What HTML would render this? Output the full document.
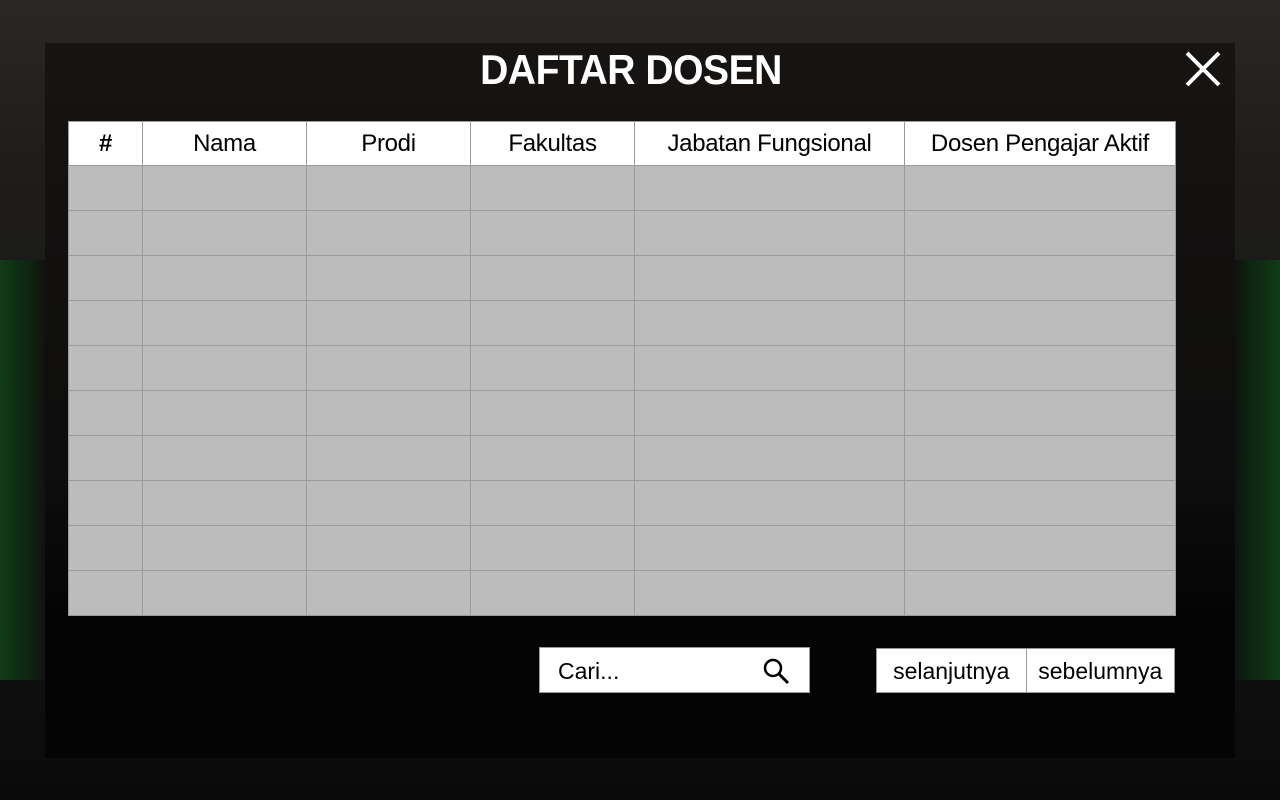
<!DOCTYPE html><html><head><style>
*{margin:0;padding:0;box-sizing:border-box}
body{width:1280px;height:800px;overflow:hidden;font-family:"Liberation Sans",sans-serif;position:relative;
background:linear-gradient(180deg,#2a2826 0%,#1f1d1b 20%,#161816 55%,#0a0a0a 100%);}
.gl{position:absolute;left:0;top:260px;width:45px;height:420px;background:linear-gradient(90deg,#123a18,#0c2410 70%,#111);}
.gr{position:absolute;right:0;top:260px;width:45px;height:420px;background:linear-gradient(270deg,#123a18,#0c2410 70%,#111);}
.modal{position:absolute;left:45px;top:43px;width:1190px;height:715px;background:linear-gradient(180deg,rgba(20,17,15,0.85),rgba(12,12,12,0.85) 60%,rgba(3,3,3,0.95) 80%)}
h1{position:absolute;left:0;width:1262px;top:46px;text-align:center;color:#fff;font-size:42px;font-weight:bold;letter-spacing:-0.5px;transform:scaleX(0.93)}
.x{position:absolute;left:1184px;top:50px}
table{position:absolute;left:68px;top:121px;width:1108px;border-collapse:collapse}
td,th{border:1px solid #9a9a9a}
th{background:#fff;height:44px;font-weight:normal;font-size:24px;color:#000;letter-spacing:-0.3px}
td{background:rgba(196,196,196,0.96);height:45px}
.search{position:absolute;left:539px;top:647px;width:271px;height:46px;background:#fff;border:1px solid #999;font-size:23px;padding:10px 18px;color:#000}
.btns{position:absolute;left:876px;top:648px;width:299px;height:45px;display:flex;border:1px solid #999}
.btns div{background:#fff;font-size:23px;padding:9px 0;color:#000;width:149px;text-align:center}
.btns div+div{border-left:1px solid #999}
</style></head><body>
<div class="gl"></div><div class="gr"></div>
<div class="modal"></div>
<h1>DAFTAR DOSEN</h1>
<svg class="x" width="38" height="38" viewBox="0 0 38 38"><path d="M3 3L35 35M35 3L3 35" stroke="#fff" stroke-width="4"/></svg>
<table>
<tr><th style="width:74px;font-weight:bold">#</th><th style="width:164px">Nama</th><th style="width:164px">Prodi</th><th style="width:164px">Fakultas</th><th style="width:270px">Jabatan Fungsional</th><th>Dosen Pengajar Aktif</th></tr>
<tr><td></td><td></td><td></td><td></td><td></td><td></td></tr>
<tr><td></td><td></td><td></td><td></td><td></td><td></td></tr>
<tr><td></td><td></td><td></td><td></td><td></td><td></td></tr>
<tr><td></td><td></td><td></td><td></td><td></td><td></td></tr>
<tr><td></td><td></td><td></td><td></td><td></td><td></td></tr>
<tr><td></td><td></td><td></td><td></td><td></td><td></td></tr>
<tr><td></td><td></td><td></td><td></td><td></td><td></td></tr>
<tr><td></td><td></td><td></td><td></td><td></td><td></td></tr>
<tr><td></td><td></td><td></td><td></td><td></td><td></td></tr>
<tr><td></td><td></td><td></td><td></td><td></td><td></td></tr>
</table>
<div class="search">Cari...
<svg style="position:absolute;left:222px;top:9px" width="28" height="28" viewBox="0 0 28 28"><circle cx="11" cy="11" r="8" fill="none" stroke="#000" stroke-width="2.5"/><path d="M17 17L26 26" stroke="#000" stroke-width="3"/></svg></div>
<div class="btns"><div>selanjutnya</div><div>sebelumnya</div></div>
</body></html>
